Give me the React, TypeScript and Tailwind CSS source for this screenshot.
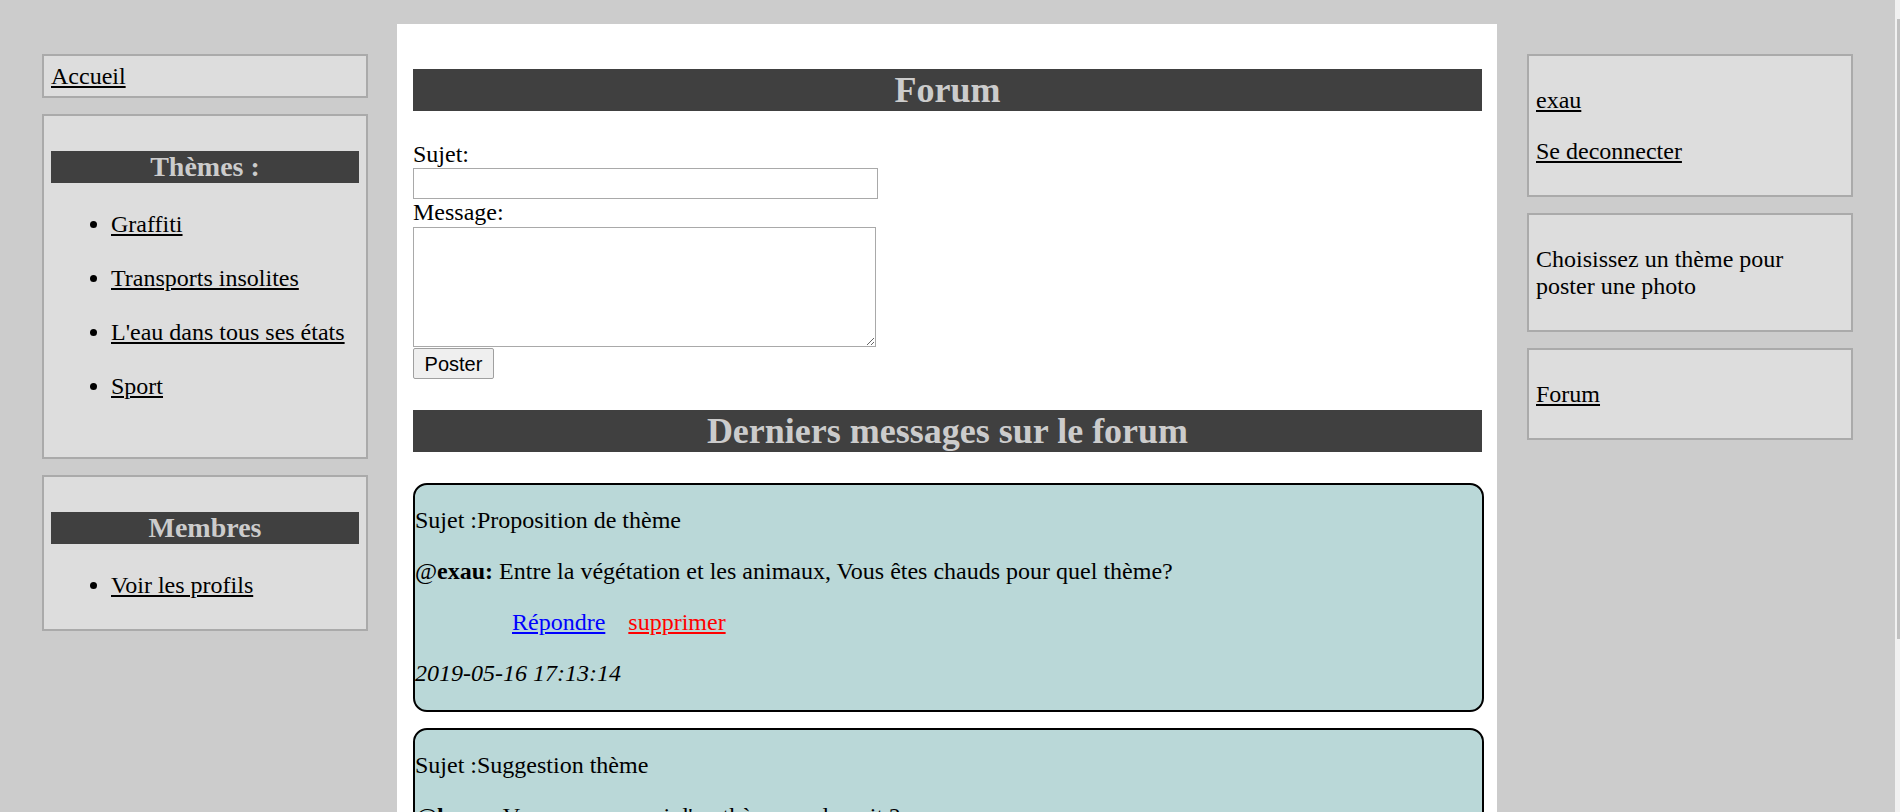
import React from "react";

function NavItem({ label }: { label: string }) {
  return (
    <li className="flex items-center pl-[39px]">
      <span className="mr-[14px] inline-block h-[7px] w-[7px] rounded-full bg-black" />
      <a href="#" className="text-black underline">
        {label}
      </a>
    </li>
  );
}

function BarTitle({ children }: { children: React.ReactNode }) {
  return (
    <h3 className="h-[32px] bg-[#404040] text-center text-[28px] font-bold leading-[32px] text-[#cccccc]">
      {children}
    </h3>
  );
}

function MainTitle({ children, className }: { children: React.ReactNode; className?: string }) {
  return (
    <h2
      className={
        "h-[42px] bg-[#404040] text-center text-[36px] font-bold leading-[42px] text-[#cccccc] " +
        (className ?? "")
      }
    >
      {children}
    </h2>
  );
}

export default function App() {
  return (
    <div className="flex h-[812px] w-[1900px] overflow-hidden bg-[#cccccc] font-['Liberation_Serif','Times_New_Roman',serif] text-[24px] leading-[27px] text-black">
      <div className="flex w-[1895px] items-start">
        {/* Left column */}
        <aside className="ml-[42px] mt-[54px] flex w-[326px] flex-col gap-[16px]">
          <div className="border-2 border-[#aaaaaa] bg-[#dddddd] px-[7px] pb-[6px] pt-[7px]">
            <a href="#" className="text-black underline">
              Accueil
            </a>
          </div>
          <div className="border-2 border-[#aaaaaa] bg-[#dddddd] px-[7px] pb-[57px] pt-[35px]">
            <BarTitle>Thèmes :</BarTitle>
            <ul className="mt-[28px] flex flex-col gap-[27px]">
              <NavItem label="Graffiti" />
              <NavItem label="Transports insolites" />
              <NavItem label="L'eau dans tous ses états" />
              <NavItem label="Sport" />
            </ul>
          </div>
          <div className="border-2 border-[#aaaaaa] bg-[#dddddd] px-[7px] pb-[30px] pt-[35px]">
            <BarTitle>Membres</BarTitle>
            <ul className="mt-[28px] flex flex-col">
              <NavItem label="Voir les profils" />
            </ul>
          </div>
        </aside>

        {/* Main */}
        <main className="ml-[29px] mt-[24px] w-[1100px] self-stretch bg-white pl-[16px] pr-[15px] pt-[15px]">
          <MainTitle className="mt-[30px]">Forum</MainTitle>
          <form className="mt-[30px] flex flex-col items-start" onSubmit={(e) => e.preventDefault()}>
            <label>Sujet:</label>
            <input
              type="text"
              className="block h-[31px] w-[465px] border border-[#a9a9a9] bg-white px-1 text-[20px] outline-none"
            />
            <label>Message:</label>
            <textarea className="mt-[1px] block h-[120px] w-[463px] border border-[#a9a9a9] bg-white outline-none" />
            <button
              type="submit"
              className="mt-[1px] flex h-[31px] w-[81px] items-center justify-center rounded-[2px] border border-[#a0a0a0] bg-[#efefef] font-['Liberation_Sans',Arial,sans-serif] text-[20px] leading-none text-black"
            >
              Poster
            </button>
          </form>
          <MainTitle className="mt-[31px]">Derniers messages sur le forum</MainTitle>

          <div className="mt-[30.5px] mr-[-2px] flex flex-col gap-[16px]">
            <div className="rounded-[14px] border-2 border-black bg-[#bad8d8]">
              <p className="mb-[24px] mt-[22px]">Sujet :Proposition de thème</p>
              <p className="my-[24px]">
                @<b>exau:</b> Entre la végétation et les animaux, Vous êtes chauds pour quel thème?
              </p>
              <p className="my-[24px] pl-[97px]">
                <a href="#" className="text-[#0000ff] underline">
                  Répondre
                </a>
                <a href="#" className="ml-[23px] text-[#ff0000] underline">
                  supprimer
                </a>
              </p>
              <p className="mb-[23px] mt-[24px] italic">2019-05-16 17:13:14</p>
            </div>
            <div className="rounded-[14px] border-2 border-black bg-[#bad8d8]">
              <p className="mb-[24px] mt-[22px]">Sujet :Suggestion thème</p>
              <p className="my-[24px]">
                @<b>lucas:</b> Vous pensez quoi d'un thème sur la nuit ?
              </p>
              <p className="my-[24px] pl-[97px]">
                <a href="#" className="text-[#0000ff] underline">
                  Répondre
                </a>
              </p>
              <p className="mb-[23px] mt-[24px] italic">2019-05-16 17:20:02</p>
            </div>
          </div>
        </main>

        {/* Right column */}
        <aside className="ml-[30px] mt-[54px] flex w-[326px] flex-col gap-[16px]">
          <div className="border-2 border-[#aaaaaa] bg-[#dddddd] px-[7px] pb-[6px] pt-[7px]">
            <p className="my-[24px]">
              <a href="#" className="text-black underline">
                exau
              </a>
            </p>
            <p className="my-[24px]">
              <a href="#" className="text-black underline">
                Se deconnecter
              </a>
            </p>
          </div>
          <div className="border-2 border-[#aaaaaa] bg-[#dddddd] px-[7px] pb-[6px] pt-[7px]">
            <p className="my-[24px]">Choisissez un thème pour poster une photo</p>
          </div>
          <div className="border-2 border-[#aaaaaa] bg-[#dddddd] px-[7px] pb-[6px] pt-[7px]">
            <p className="my-[24px]">
              <a href="#" className="text-black underline">
                Forum
              </a>
            </p>
          </div>
        </aside>
      </div>

      {/* Scrollbar strip */}
      <div className="relative h-full w-[5px] bg-[#f1f1f1]">
        <div className="absolute left-[2px] top-[19px] h-[620px] w-[3px] bg-[#c1c1c1]" />
      </div>
    </div>
  );
}
